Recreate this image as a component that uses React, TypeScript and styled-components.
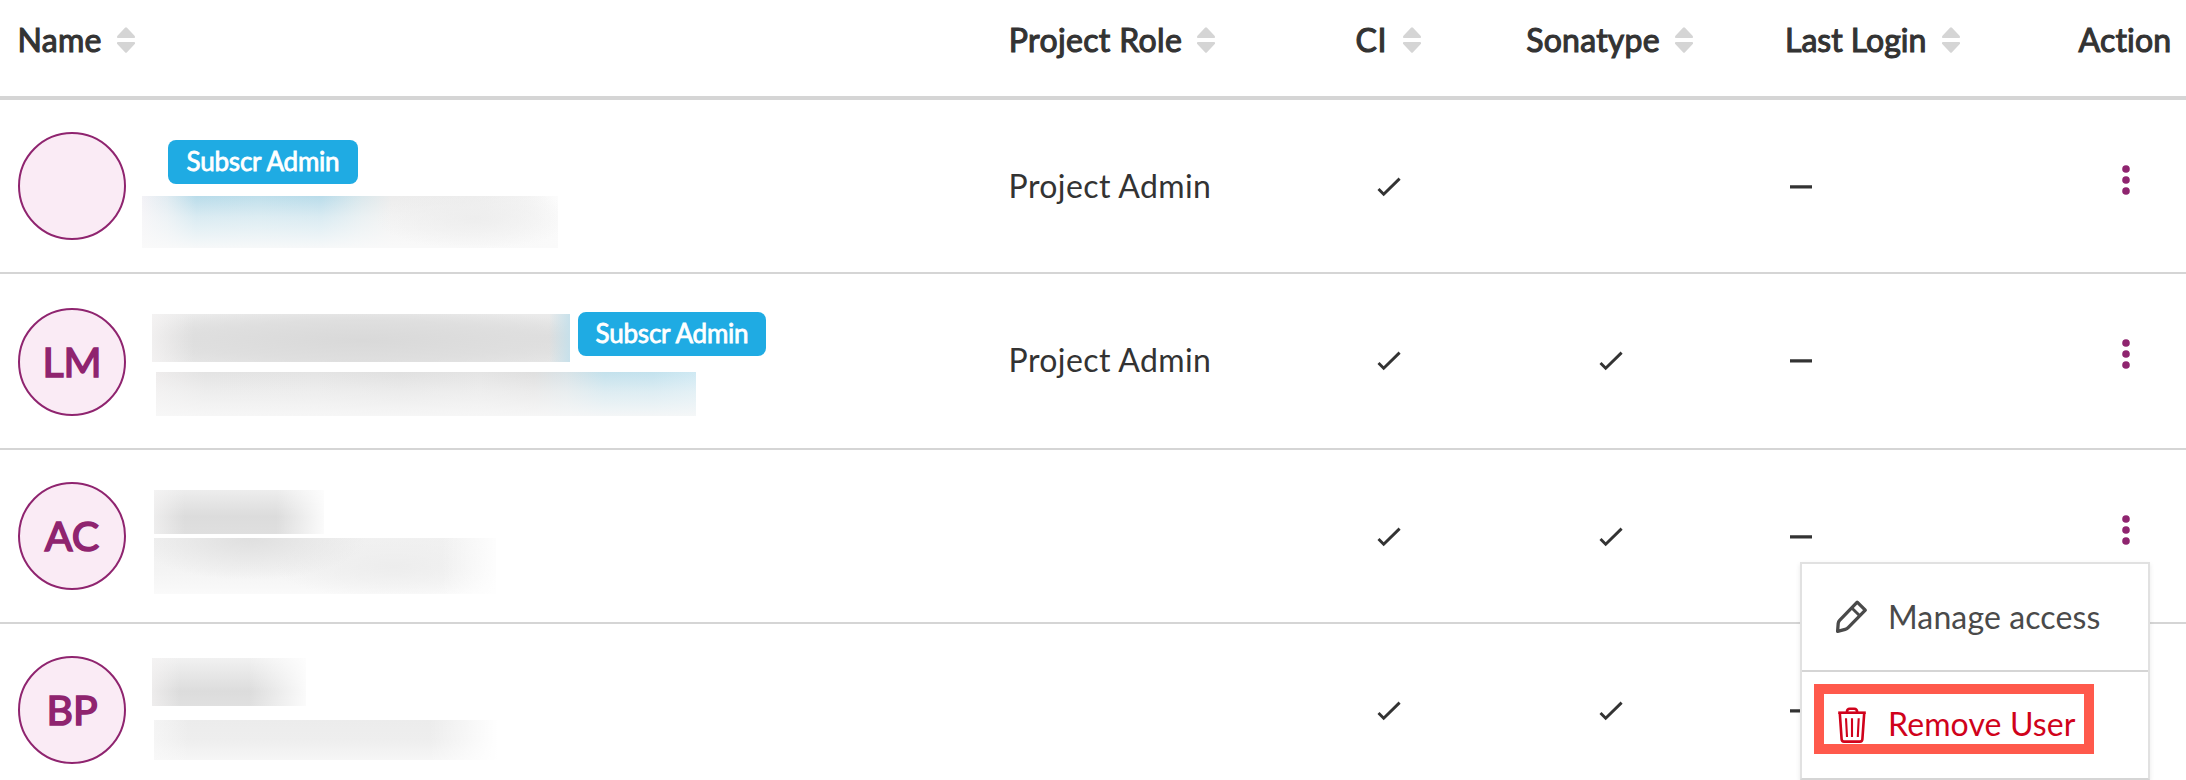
import React from "react";
import styled, { createGlobalStyle } from "styled-components";

const GlobalStyle = createGlobalStyle`
  *, *::before, *::after { box-sizing: border-box; }
  body {
    margin: 0;
    background: #fff;
    color: #333;
    font-family: Lato, "Liberation Sans", sans-serif;
    font-size: 32px;
    line-height: 40px;
    overflow: hidden;
  }
`;

const Table = styled.main`
  width: 2186px;
  height: 780px;
  display: flex;
  flex-direction: column;
  overflow: hidden;
  background: #fff;
`;

const columns = "1008px 347px 171px 259px 292px 109px";

const HeaderRow = styled.div`
  display: grid;
  grid-template-columns: ${columns};
  flex: none;
  height: 100px;
  padding-top: 20px;
  border-bottom: 4px solid #d5d5d5;
`;

const HeaderCell = styled.div<{ $indent?: number; $gap?: number }>`
  display: flex;
  align-items: flex-start;
  gap: ${(p) => p.$gap ?? 15}px;
  height: 40px;
  padding-left: ${(p) => p.$indent ?? 0}px;
  white-space: nowrap;
`;

const HeaderLabel = styled.span<{ $spacing?: number }>`
  letter-spacing: ${(p) => p.$spacing ?? 0.2}px;
  -webkit-text-stroke: 1.1px #333;
`;

const SortSvg = styled.svg`
  flex: none;
  width: 18px;
  height: 26px;
  margin-top: 7px;
  fill: #d5d5d5;
`;

const Row = styled.div<{ $height: number }>`
  display: grid;
  grid-template-columns: ${columns};
  flex: none;
  height: ${(p) => p.$height}px;
  border-bottom: 2px solid #d5d5d5;
`;

const UserCell = styled.div<{ $top: number }>`
  display: flex;
  align-items: flex-start;
  padding: ${(p) => p.$top}px 0 0 18px;
`;

const Avatar = styled.div`
  display: flex;
  align-items: center;
  justify-content: center;
  flex: none;
  width: 108px;
  height: 108px;
  border: 2px solid #8f246f;
  border-radius: 50%;
  background: #faebf5;
  color: #8f246f;
  font-size: 41px;
  -webkit-text-stroke: 1.6px #8f246f;
`;

const Details = styled.div<{ $left: number; $top: number }>`
  display: flex;
  flex-direction: column;
  align-items: flex-start;
  margin: ${(p) => p.$top}px 0 0 ${(p) => p.$left}px;
`;

const NameLine = styled.div<{ $left?: number }>`
  display: flex;
  align-items: flex-start;
  gap: 8px;
  margin-left: ${(p) => p.$left ?? 0}px;
`;

const Badge = styled.span<{ $width: number }>`
  display: flex;
  align-items: center;
  justify-content: center;
  width: ${(p) => p.$width}px;
  height: 44px;
  padding-bottom: 2px;
  border-radius: 8px;
  background: #1fabe3;
  color: #fff;
  font-size: 26px;
  letter-spacing: -0.2px;
  white-space: nowrap;
  -webkit-text-stroke: 0.8px #fff;
`;

const Smudge = styled.div<{ $w: number; $h: number; $top?: number; $left?: number; $fill: string }>`
  width: ${(p) => p.$w}px;
  height: ${(p) => p.$h}px;
  margin: ${(p) => p.$top ?? 0}px 0 0 ${(p) => p.$left ?? 0}px;
  background: ${(p) => p.$fill};
`;

const RoleCell = styled.div`
  padding: 66px 0 0 0.6px;
  letter-spacing: 0.4px;
  white-space: nowrap;
`;

const IconCell = styled.div<{ $left: number; $top: number }>`
  padding: ${(p) => p.$top}px 0 0 ${(p) => p.$left}px;
  line-height: 0;
`;

const CheckSvg = styled.svg`
  width: 28px;
  height: 24px;
  fill: none;
  stroke: #333;
  stroke-width: 2.9;
`;

const Dash = styled.div`
  width: 22px;
  height: 4px;
  background: linear-gradient(#666 0 1px, #333 1px 3px, #999 3px);
`;

const MoreSvg = styled.svg`
  width: 8px;
  height: 30px;
  fill: #8f246f;
`;

const Menu = styled.div`
  position: absolute;
  left: 1800px;
  top: 562px;
  width: 350px;
  height: 218px;
  border: 2px solid #e1e1e1;
  border-bottom-color: #d5d5d5;
  background: #fff;
  box-shadow: 0 2px 5px rgba(0, 0, 0, 0.09);
`;

const MenuItem = styled.div<{ $danger?: boolean }>`
  display: flex;
  align-items: center;
  height: ${(p) => (p.$danger ? 106 : 108)}px;
  padding: 0 0 ${(p) => (p.$danger ? 2 : 0)}px 32px;
  gap: 18px;
  border-bottom: ${(p) => (p.$danger ? "0" : "2px solid #d5d5d5")};
  color: ${(p) => (p.$danger ? "#d0021b" : "#4a4a4a")};
  letter-spacing: 0.12px;
  white-space: nowrap;
`;

const MenuLabel = styled.span`
  padding-bottom: 1px;
`;

const ItemSvg = styled.svg`
  flex: none;
  width: 36px;
  height: 40px;
  fill: none;
  stroke: currentColor;
  stroke-linejoin: round;
`;

const Highlight = styled.div`
  position: absolute;
  left: 12px;
  top: 120px;
  width: 280px;
  height: 70px;
  border: 10px solid #ff594c;
`;

const SortIcon = () => (
  <SortSvg viewBox="0 0 18 26">
    <path d="M8 .7Q9 -.3 10 .7L18 9.2V10.2Q18 11 17.2 11H.8Q0 11 0 10.2V9.2Z" />
    <path d="M8 25.3Q9 26.3 10 25.3L18 16.8V15.8Q18 15 17.2 15H.8Q0 15 0 15.8V16.8Z" />
  </SortSvg>
);

const CheckIcon = () => (
  <CheckSvg viewBox="0 0 28 24">
    <path d="M2.5 13 7.7 18.2 23.6 2.6" />
  </CheckSvg>
);

const MoreIcon = () => (
  <MoreSvg viewBox="0 0 8 30">
    <circle cx="4" cy="4" r="3.8" />
    <circle cx="4" cy="15" r="3.8" />
    <circle cx="4" cy="26" r="3.8" />
  </MoreSvg>
);

const PencilIcon = () => (
  <ItemSvg viewBox="0 0 36 40" strokeWidth="3.3">
    <path d="M3.6 34.3 4.2 26.4Q4.4 24.6 5.6 23.4L23.2 5.2 31.3 13.2 14.4 30.3Q13 31.8 11.2 32.3Z" />
    <path d="M17.6 10.7 26 19" strokeWidth="2.9" />
  </ItemSvg>
);

const TrashIcon = () => (
  <ItemSvg viewBox="0 0 36 40" strokeWidth="2.6">
    <path d="M4.2 8.7H31.8" />
    <path d="M12.9 8.2Q13 4.8 15.7 4.8H20.3Q23 4.8 23.2 8.2" />
    <path d="M5.8 9.2 7.6 35.1Q7.8 37.6 10 37.6H26Q28.2 37.6 28.4 35.1L30.2 9.2" />
    <path d="M12 14.3 13 33M18 14.3V33M24.7 14.3 23.8 33" strokeWidth="2.1" />
  </ItemSvg>
);

const headers = [
  { label: "Name", indent: 17.5, spacing: 0.3 },
  { label: "Project Role", indent: 0.8, spacing: 0.35 },
  { label: "CI", indent: 0.6, gap: 16.5, spacing: 0.5 },
  { label: "Sonatype", indent: 0.2, spacing: 0.25 },
  { label: "Last Login", indent: 0, gap: 16, spacing: 0 },
];

const fadeEnd = (start: string) => `linear-gradient(90deg, rgba(255,255,255,0) ${start}, rgba(255,255,255,.88) 100%)`;

const fills = {
  adminMail: `radial-gradient(24% 60% at 80% 42%, rgba(237,237,237,.9) 0%, rgba(240,240,240,0) 100%), linear-gradient(rgba(250,250,250,0) 0%, rgba(250,250,250,.5) 40%, rgba(250,250,250,.95) 100%), linear-gradient(90deg, #f3f2f6 0%, #e0ebf1 6%, #b9dcea 13%, #bfdfeb 28%, #b9dcea 43%, #dbe8ec 53%, #ececec 60%, #ededed 80%, #f4f4f4 93%, #fcfcfc 100%)`,
  lmName: `linear-gradient(90deg, rgba(202,228,238,0) 95%, rgba(196,224,235,.9) 100%), linear-gradient(90deg, rgba(247,245,245,.75) 0%, rgba(230,230,230,0) 10%), radial-gradient(60% 70% at 50% 55%, #d9d9d9 0%, rgba(222,222,222,.9) 60%, rgba(228,228,228,0) 100%), linear-gradient(#ebebeb, #dedede 50%, #e6e6e6)`,
  lmMail: `linear-gradient(rgba(248,248,248,0) 0%, rgba(248,248,248,.5) 45%, rgba(248,248,248,.92) 100%), linear-gradient(90deg, #eeecec 0%, #e3e3e3 9%, #e4e4e4 30%, #e0e0e0 45%, #e4e4e4 60%, #dfdfdf 70%, #d9e3e7 76%, #c3e1ec 83%, #c3e2ee 92%, #cfe9f3 100%)`,
  acName: `${fadeEnd("72%")}, linear-gradient(90deg, rgba(247,246,246,.65) 0%, rgba(230,230,230,0) 18%), linear-gradient(#ededed 0%, #dcdcdc 60%, #dfdfdf 100%)`,
  acMail: `${fadeEnd("84%")}, radial-gradient(34% 75% at 28% 0%, #dfdfdf 0%, rgba(235,235,235,0) 100%), radial-gradient(35% 60% at 70% 50%, #ededed 0%, rgba(245,245,245,0) 100%), linear-gradient(#f1f1f1, #f4f4f4 60%, #fafafa)`,
  bpName: `${fadeEnd("63%")}, linear-gradient(90deg, rgba(246,244,244,.65) 0%, rgba(230,230,230,0) 18%), linear-gradient(#f1f1f1 0%, #dcdcdc 70%, #e0e0e0 100%)`,
  bpMail: `linear-gradient(90deg, rgba(255,255,255,0) 80%, #fff 100%), linear-gradient(90deg, rgba(250,250,250,.6) 0%, rgba(245,245,245,0) 10%), linear-gradient(#ececec, #eeeeee 50%, #f6f6f6)`,
};

interface User {
  initials: string;
  height: number;
  top: number;
  role?: string;
  sonatype: boolean;
  details: React.ReactNode;
}

const users: User[] = [
  {
    initials: "",
    height: 174,
    top: 32,
    role: "Project Admin",
    sonatype: false,
    details: (
      <Details $left={16} $top={8}>
        <NameLine $left={26}>
          <Badge $width={190}>Subscr Admin</Badge>
        </NameLine>
        <Smudge $w={416} $h={52} $top={12} $fill={fills.adminMail} />
      </Details>
    ),
  },
  {
    initials: "LM",
    height: 176,
    top: 34,
    role: "Project Admin",
    sonatype: true,
    details: (
      <Details $left={26} $top={4}>
        <NameLine>
          <Smudge $w={418} $h={48} $top={2} $fill={fills.lmName} />
          <Badge $width={188}>Subscr Admin</Badge>
        </NameLine>
        <Smudge $w={540} $h={44} $top={10} $left={4} $fill={fills.lmMail} />
      </Details>
    ),
  },
  {
    initials: "AC",
    height: 174,
    top: 32,
    sonatype: true,
    details: (
      <Details $left={28} $top={8}>
        <Smudge $w={170} $h={44} $fill={fills.acName} />
        <Smudge $w={342} $h={56} $top={4} $fill={fills.acMail} />
      </Details>
    ),
  },
  {
    initials: "BP",
    height: 174,
    top: 32,
    sonatype: true,
    details: (
      <Details $left={26} $top={2}>
        <Smudge $w={154} $h={48} $fill={fills.bpName} />
        <Smudge $w={344} $h={40} $top={14} $left={2} $fill={fills.bpMail} />
      </Details>
    ),
  },
];

export default function App() {
  return (
    <>
      <GlobalStyle />
      <Table>
        <HeaderRow>
          {headers.map((h) => (
            <HeaderCell key={h.label} $indent={h.indent} $gap={h.gap}>
              <HeaderLabel $spacing={h.spacing}>{h.label}</HeaderLabel>
              <SortIcon />
            </HeaderCell>
          ))}
          <HeaderCell $indent={1.5}>
            <HeaderLabel $spacing={0.2}>Action</HeaderLabel>
          </HeaderCell>
        </HeaderRow>
        {users.map((user, i) => (
          <Row key={i} $height={user.height}>
            <UserCell $top={user.top}>
              <Avatar>{user.initials}</Avatar>
              {user.details}
            </UserCell>
            <RoleCell>{user.role}</RoleCell>
            <IconCell $left={21} $top={76}>
              <CheckIcon />
            </IconCell>
            <IconCell $left={72} $top={76}>
              {user.sonatype && <CheckIcon />}
            </IconCell>
            <IconCell $left={5} $top={85}>
              <Dash />
            </IconCell>
            <IconCell $left={45} $top={65}>
              <MoreIcon />
            </IconCell>
          </Row>
        ))}
      </Table>
      <Menu>
        <MenuItem>
          <PencilIcon />
          <MenuLabel>Manage access</MenuLabel>
        </MenuItem>
        <MenuItem $danger>
          <TrashIcon />
          <MenuLabel>Remove User</MenuLabel>
        </MenuItem>
        <Highlight />
      </Menu>
    </>
  );
}
